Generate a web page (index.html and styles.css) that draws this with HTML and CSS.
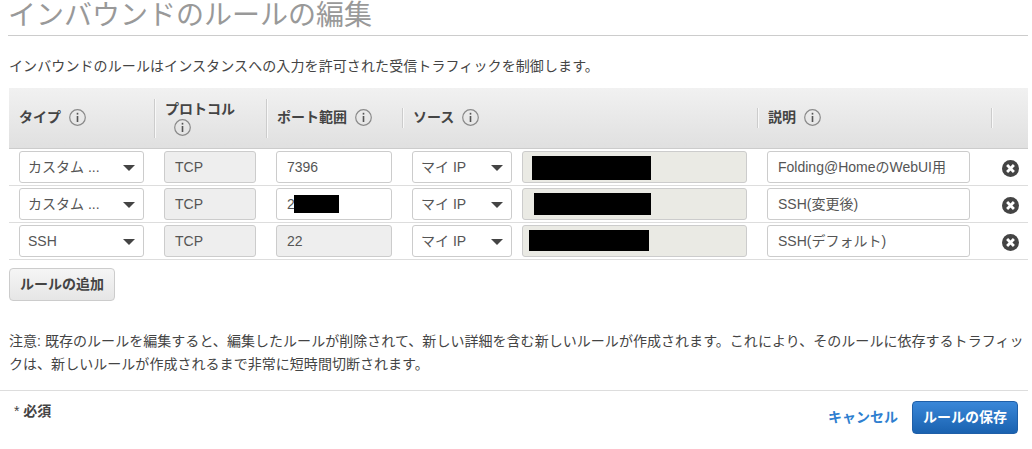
FILE: index.html
```html
<!DOCTYPE html>
<html lang="ja">
<head>
<meta charset="utf-8">
<title>インバウンドのルールの編集</title>
<link rel="stylesheet" href="styles.css">
</head>
<body>
<svg class="defs" width="0" height="0" aria-hidden="true">
  <symbol id="info" viewBox="0 0 17 17">
    <circle cx="8.5" cy="8.5" r="7.8" fill="none" stroke="#8a8a8a" stroke-width="1.2"/>
    <rect x="7.7" y="7" width="1.6" height="6" fill="#555"/>
    <rect x="7.7" y="3.8" width="1.6" height="1.8" fill="#555"/>
  </symbol>
  <symbol id="del" viewBox="0 0 18 18">
    <circle cx="9" cy="9" r="9" fill="#444"/>
    <path d="M5.4 5.4l7.2 7.2M12.6 5.4l-7.2 7.2" stroke="#fff" stroke-width="3" fill="none"/>
  </symbol>
</svg>
<main class="page">
  <h1 class="title">インバウンドのルールの編集</h1>
  <p class="lead">インバウンドのルールはインスタンスへの入力を許可された受信トラフィックを制御します。</p>

  <div class="thead">
    <div class="th th-first">タイプ<svg class="info"><use href="#info"/></svg></div>
    <div class="th th-tall">プロトコル<svg class="info info-block"><use href="#info"/></svg></div>
    <div class="th th-mid">ポート範囲<svg class="info"><use href="#info"/></svg></div>
    <div class="th">ソース<svg class="info"><use href="#info"/></svg></div>
    <div class="th">説明<svg class="info"><use href="#info"/></svg></div>
    <div class="th"></div>
  </div>

  <div class="row">
    <div class="field select">カスタム ...<i class="arrow"></i></div>
    <div class="field off">TCP</div>
    <div class="field">7396</div>
    <div class="source">
      <div class="field select mine">マイ IP<i class="arrow"></i></div>
      <div class="field ip"><span class="mask mask-a"></span></div>
    </div>
    <div class="field">Folding@HomeのWebUI用</div>
    <svg class="del"><use href="#del"/></svg>
  </div>
  <div class="row">
    <div class="field select">カスタム ...<i class="arrow"></i></div>
    <div class="field off">TCP</div>
    <div class="field port">2<span class="mask mask-p"></span></div>
    <div class="source">
      <div class="field select mine">マイ IP<i class="arrow"></i></div>
      <div class="field ip"><span class="mask mask-b"></span></div>
    </div>
    <div class="field">SSH(変更後)</div>
    <svg class="del"><use href="#del"/></svg>
  </div>
  <div class="row">
    <div class="field select">SSH<i class="arrow"></i></div>
    <div class="field off">TCP</div>
    <div class="field off">22</div>
    <div class="source">
      <div class="field select mine">マイ IP<i class="arrow"></i></div>
      <div class="field ip"><span class="mask mask-c"></span></div>
    </div>
    <div class="field">SSH(デフォルト)</div>
    <svg class="del"><use href="#del"/></svg>
  </div>

  <button class="btn add" type="button">ルールの追加</button>

  <p class="note">注意: 既存のルールを編集すると、編集したルールが削除されて、新しい詳細を含む新しいルールが作成されます。これにより、そのルールに依存するトラフィッ<br>クは、新しいルールが作成されるまで非常に短時間切断されます。</p>

  <footer class="foot">
    <span class="req"><span class="star">*</span> 必須</span>
    <div class="actions">
      <a class="cancel" href="#">キャンセル</a>
      <button class="btn save" type="button">ルールの保存</button>
    </div>
  </footer>
</main>
</body>
</html>
```
FILE: styles.css
```css
* { box-sizing: border-box; }
html, body { margin: 0; padding: 0; background: #fff; overflow: hidden; }
body {
  font-family: "Liberation Sans", "Noto Sans CJK JP", sans-serif;
  font-size: 14px;
  color: #444;
  height: 449px;
}
.defs { position: absolute; }
.page { padding-left: 9px; width: 1028px; }
.title {
  margin: 0 0 0 -1px;
  height: 36px;
  font-size: 28px;
  font-weight: 400;
  line-height: 32px;
  color: #999;
  border-bottom: 1px solid #ccc;
  white-space: nowrap;
}
.lead {
  margin: 0;
  height: 52px;
  padding-top: 20px;
  line-height: 20px;
  color: #444;
  letter-spacing: .1px;
}
.thead {
  display: grid;
  grid-template-columns: 145px 112px 136px 355px 234px 37px;
  height: 61px;
  align-items: center;
  background: linear-gradient(#f1f1f1, #e0e0e0);
  border-bottom: 1px solid #ccc;
}
.th {
  height: 20px;
  padding-left: 10px;
  font-weight: 700;
  font-size: 14px;
  line-height: 18px;
  color: #444;
  border-left: 1px solid #ccc;
  box-shadow: inset 1px 0 0 #f8f8f8;
  white-space: nowrap;
}
.th-first { border-left: 0; box-shadow: none; padding-left: 10px; }
.th-tall { height: 39px; white-space: normal; line-height: 20px; }
.th-mid { height: 39px; line-height: 37px; }
.info { width: 17px; height: 17px; margin-left: 8px; vertical-align: -4px; }
.info-block { display: block; margin: 0 0 0 9px; }
.row {
  display: grid;
  grid-template-columns: 125px 92px 116px 335px 203px 18px;
  column-gap: 20px;
  align-items: center;
  height: 37px;
  padding: 2px 0 2px 10px;
  border-bottom: 1px solid #ddd;
}
.field {
  position: relative;
  height: 32px;
  padding: 0 10px;
  line-height: 30px;
  font-size: 14px;
  color: #555;
  background: #fff;
  border: 1px solid #ccc;
  border-radius: 3px;
  white-space: nowrap;
}
.select { padding-left: 8px; }
.off { background: #eee; }
.arrow {
  position: absolute;
  right: 8px;
  top: 13px;
  width: 0;
  height: 0;
  border-left: 6px solid transparent;
  border-right: 6px solid transparent;
  border-top: 6px solid #444;
}
.source { display: flex; gap: 10px; }
.mine { width: 100px; flex: none; }
.ip { flex: 1; background: #eaeae4; }
.mask { position: absolute; background: #000; }
.mask-a { left: 9px; top: 4px; width: 119px; height: 24px; }
.mask-b { left: 11px; top: 4px; width: 117px; height: 22px; }
.mask-c { left: 6px; top: 4px; width: 120px; height: 21px; }
.mask-p { left: 17px; top: 6px; width: 45px; height: 18px; }
.del { width: 17px; height: 17px; margin-left: 12px; margin-top: 2px; }
.btn {
  display: block;
  font-family: inherit;
  font-size: 14px;
  font-weight: 700;
  border-radius: 4px;
  padding: 0;
  height: 33px;
  line-height: 31px;
  cursor: pointer;
}
.add {
  margin-top: 8px;
  width: 106px;
  color: #444;
  background: linear-gradient(#f5f5f5, #e6e6e6);
  border: 1px solid #ccc;
}
.note {
  margin: 0;
  height: 89px;
  padding-top: 29px;
  line-height: 23px;
  color: #444;
  white-space: nowrap;
  letter-spacing: .04px;
}
.foot {
  display: flex;
  justify-content: space-between;
  margin-left: -9px;
  width: 1028px;
  height: 59px;
  border-top: 1px solid #ddd;
  padding: 10px 10px 0 14px;
}
.req { font-weight: 700; line-height: 20px; color: #444; }
.star { font-weight: 400; }
.actions { display: flex; align-items: center; gap: 14px; height: 33px; }
.cancel { color: #2f7fd0; font-weight: 700; text-decoration: none; padding-bottom: 3px; }
.save {
  width: 106px;
  color: #fff;
  background: linear-gradient(#3a87d8, #1a62b0);
  border: 1px solid #1f5fa8;
}
```
